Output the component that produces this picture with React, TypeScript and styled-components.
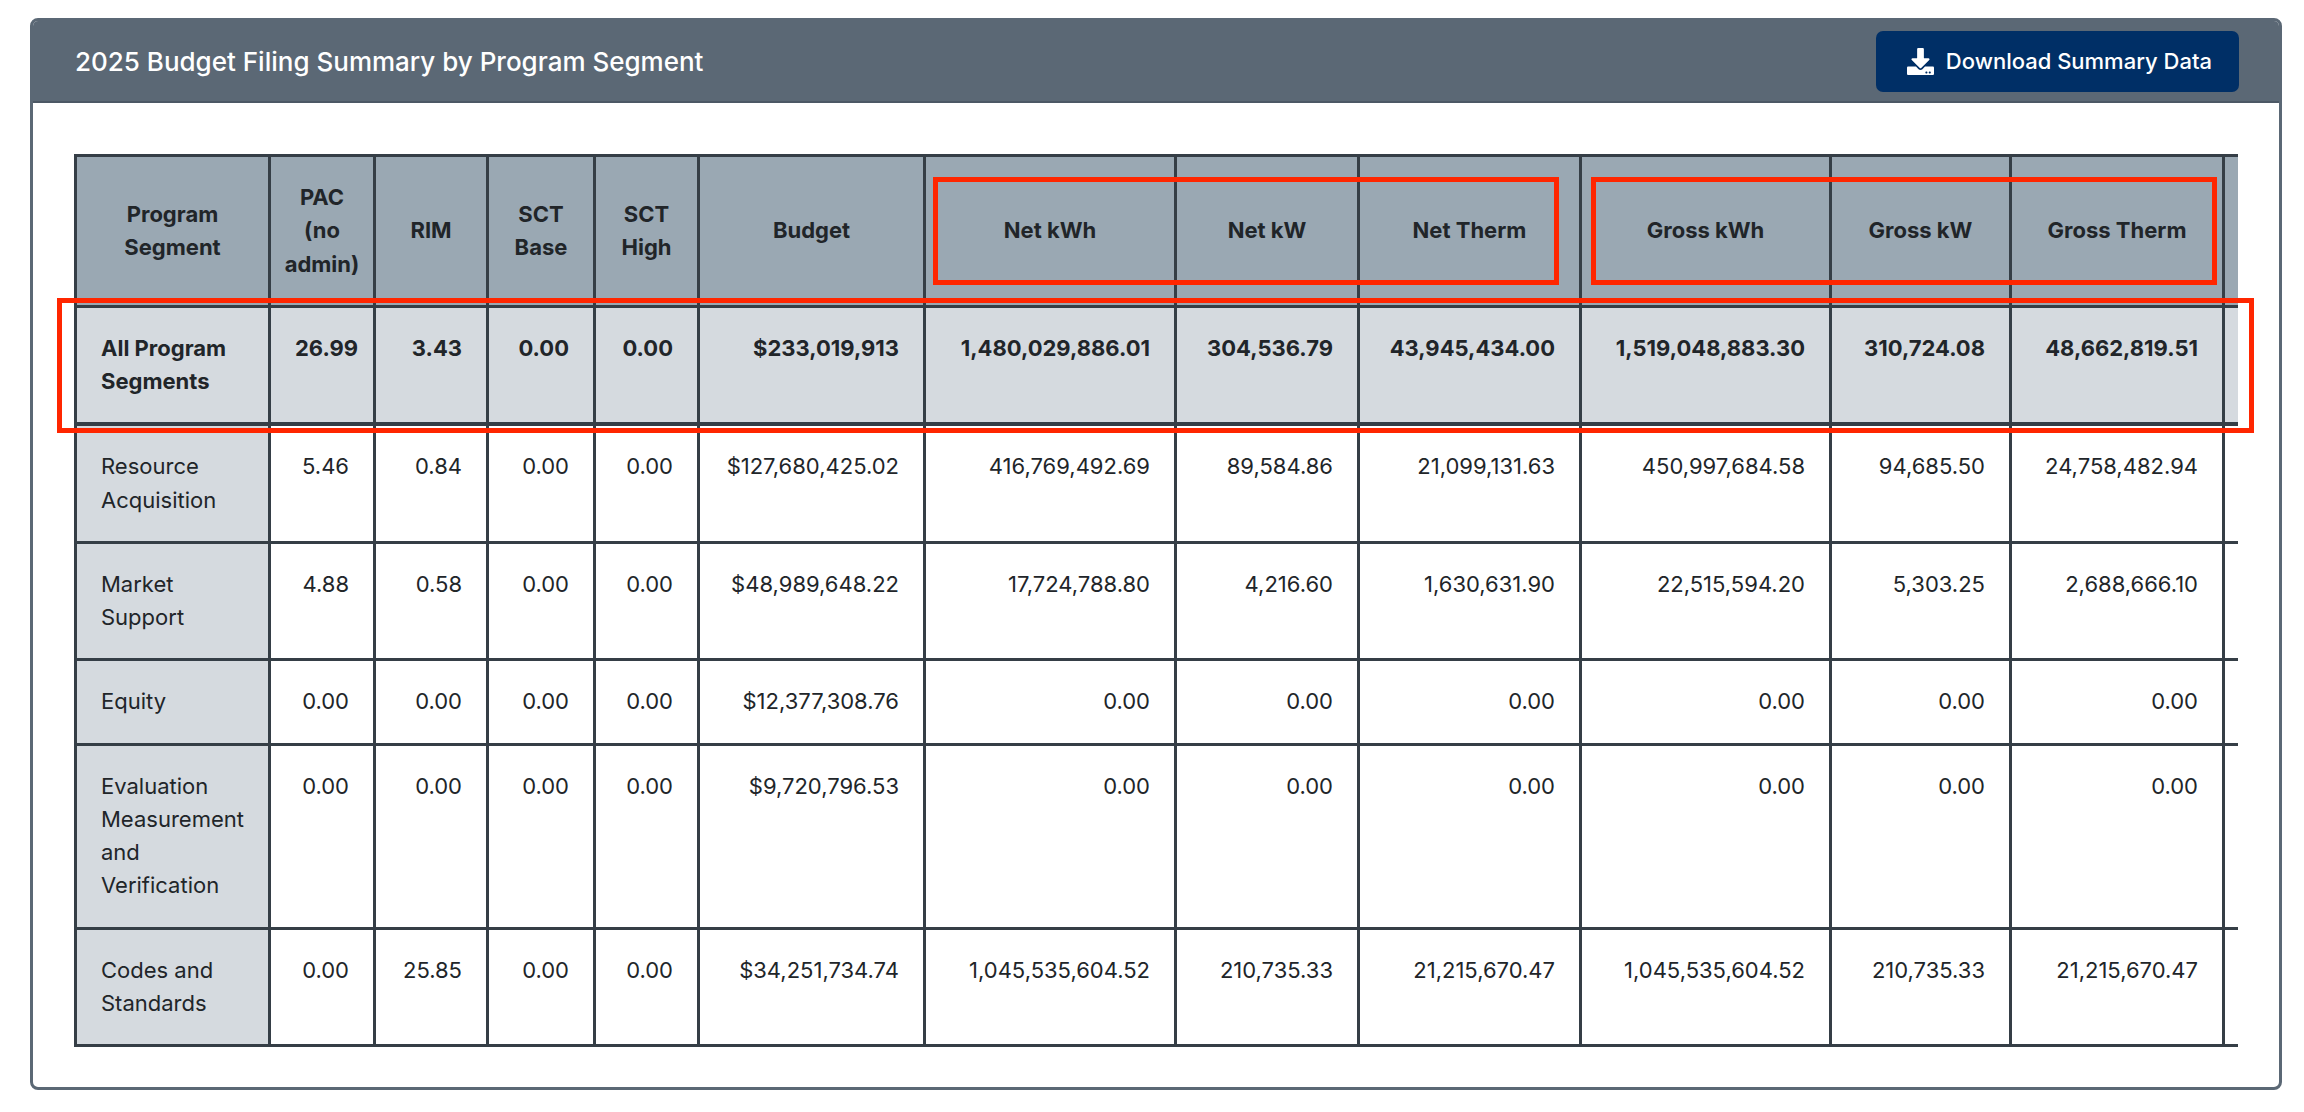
import React from "react";
import styled, { createGlobalStyle } from "styled-components";
import { FaDownload } from "react-icons/fa";

const GlobalStyle = createGlobalStyle`
  html, body {
    margin: 0;
    padding: 0;
    background: #ffffff;
  }
  body {
    font-family: Inter, "Noto Sans", "Liberation Sans", sans-serif;
    color: #212529;
  }
  * { box-sizing: border-box; }
`;

const Card = styled.section`
  position: relative;
  margin: 18px 22px 22px 30px;
  border: 3px solid #5b6875;
  border-radius: 8px;
  background: #ffffff;
  overflow: hidden;
`;

const CardHeader = styled.header`
  display: flex;
  align-items: center;
  justify-content: space-between;
  height: 82px;
  padding: 0 40px 0 42px;
  background: #5b6875;
  border-bottom: 2px solid #4c5865;
`;

const Title = styled.h2`
  margin: 0;
  font-size: 26px;
  font-weight: 500;
  color: #ffffff;
  letter-spacing: 0;
`;

const DownloadButton = styled.button`
  display: flex;
  align-items: center;
  gap: 12px;
  height: 61px;
  padding: 0 27px 0 31px;
  border: none;
  border-radius: 7px;
  background: #002f66;
  color: #ffffff;
  font-family: inherit;
  font-size: 22px;
  font-weight: 500;
  cursor: pointer;
`;

const CardBody = styled.div`
  padding: 51px 38px 40px 41px;
`;

const TableScroll = styled.div`
  width: 2164px;
  overflow: hidden;
`;

const Table = styled.table`
  border-collapse: collapse;
  table-layout: fixed;
  width: 2348px;
  font-size: 22px;
  line-height: 33.25px;
`;

const HeadCell = styled.th`
  background: #9aa8b3;
  border: 3px solid #353e46;
  padding: 24px 12px;
  font-weight: 700;
  text-align: center;
  vertical-align: middle;
  color: #212529;
`;

const Cell = styled.td<{ $total?: boolean; $label?: boolean }>`
  border: 3px solid #353e46;
  border-bottom-width: ${(p) => (p.$total ? "4px" : "3px")};
  padding: 24px;
  vertical-align: top;
  text-align: ${(p) => (p.$label ? "left" : "right")};
  font-weight: ${(p) => (p.$total ? 700 : 400)};
  background: ${(p) => (p.$total || p.$label ? "#d5dadf" : "#ffffff")};
  color: #212529;
`;

const Highlight = styled.div<{ $l: number; $t: number; $w: number; $h: number }>`
  position: absolute;
  left: ${(p) => p.$l}px;
  top: ${(p) => p.$t}px;
  width: ${(p) => p.$w}px;
  height: ${(p) => p.$h}px;
  border: 5px solid #ff2600;
  pointer-events: none;
`;

const widths = [194, 105, 113, 107, 104, 226, 251, 183, 222, 250, 180, 213, 200];

const headers = [
  "Program Segment",
  "PAC (no admin)",
  "RIM",
  "SCT Base",
  "SCT High",
  "Budget",
  "Net kWh",
  "Net kW",
  "Net Therm",
  "Gross kWh",
  "Gross kW",
  "Gross Therm",
  "",
];

const total = [
  "All Program Segments",
  "26.99",
  "3.43",
  "0.00",
  "0.00",
  "$233,019,913",
  "1,480,029,886.01",
  "304,536.79",
  "43,945,434.00",
  "1,519,048,883.30",
  "310,724.08",
  "48,662,819.51",
  "",
];

const rows: string[][] = [
  [
    "Resource Acquisition",
    "5.46",
    "0.84",
    "0.00",
    "0.00",
    "$127,680,425.02",
    "416,769,492.69",
    "89,584.86",
    "21,099,131.63",
    "450,997,684.58",
    "94,685.50",
    "24,758,482.94",
    "",
  ],
  [
    "Market Support",
    "4.88",
    "0.58",
    "0.00",
    "0.00",
    "$48,989,648.22",
    "17,724,788.80",
    "4,216.60",
    "1,630,631.90",
    "22,515,594.20",
    "5,303.25",
    "2,688,666.10",
    "",
  ],
  [
    "Equity",
    "0.00",
    "0.00",
    "0.00",
    "0.00",
    "$12,377,308.76",
    "0.00",
    "0.00",
    "0.00",
    "0.00",
    "0.00",
    "0.00",
    "",
  ],
  [
    "Evaluation Measurement and Verification",
    "0.00",
    "0.00",
    "0.00",
    "0.00",
    "$9,720,796.53",
    "0.00",
    "0.00",
    "0.00",
    "0.00",
    "0.00",
    "0.00",
    "",
  ],
  [
    "Codes and Standards",
    "0.00",
    "25.85",
    "0.00",
    "0.00",
    "$34,251,734.74",
    "1,045,535,604.52",
    "210,735.33",
    "21,215,670.47",
    "1,045,535,604.52",
    "210,735.33",
    "21,215,670.47",
    "",
  ],
];

export default function App() {
  return (
    <>
      <GlobalStyle />
      <Card>
        <CardHeader>
          <Title>2025 Budget Filing Summary by Program Segment</Title>
          <DownloadButton type="button">
            <FaDownload size={27} />
            Download Summary Data
          </DownloadButton>
        </CardHeader>
        <CardBody>
          <TableScroll>
            <Table>
              <colgroup>
                {widths.map((w, i) => (
                  <col key={i} style={{ width: w }} />
                ))}
              </colgroup>
              <thead>
                <tr>
                  {headers.map((h, i) => (
                    <HeadCell key={i}>{h}</HeadCell>
                  ))}
                </tr>
              </thead>
              <tbody>
                <tr>
                  {total.map((v, i) => (
                    <Cell key={i} $total $label={i === 0}>
                      {v}
                    </Cell>
                  ))}
                </tr>
                {rows.map((r, ri) => (
                  <tr key={ri}>
                    {r.map((v, i) => (
                      <Cell key={i} $label={i === 0}>
                        {v}
                      </Cell>
                    ))}
                  </tr>
                ))}
              </tbody>
            </Table>
          </TableScroll>
        </CardBody>
        <Highlight $l={900} $t={156} $w={626} $h={108} />
        <Highlight $l={1558} $t={156} $w={626} $h={108} />
        <Highlight $l={24} $t={277} $w={2197} $h={135} />
      </Card>
    </>
  );
}
